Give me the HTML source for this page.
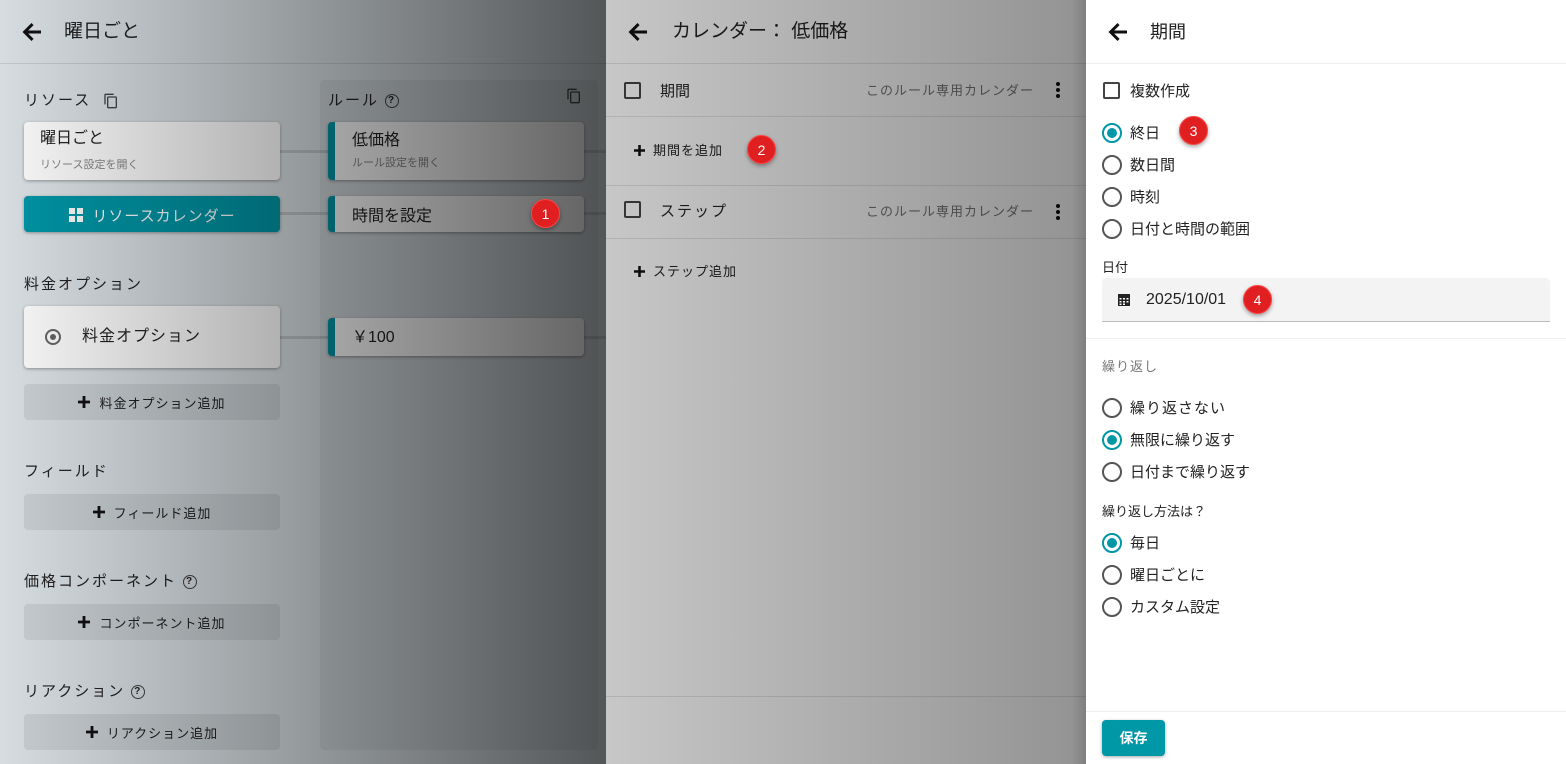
<!DOCTYPE html>
<html><head><meta charset="utf-8"><style>
*{box-sizing:border-box;margin:0;padding:0}
body{width:1566px;height:764px;overflow:hidden;position:relative;font-family:"Liberation Sans","Noto Sans CJK JP",sans-serif;color:#222;background:#fff}
.a{position:absolute}
.t{position:absolute;white-space:nowrap;line-height:1}
.card{position:absolute;background:#fff;border-radius:4px;box-shadow:0 1px 3px rgba(0,0,0,.35)}
.rc{position:absolute;background:#fff;border-radius:4px;border-left:7px solid #0097a7;box-shadow:0 1px 3px rgba(0,0,0,.35)}
.btn{position:absolute;background:rgba(0,0,0,.07);border-radius:4px;font-size:13px;display:flex;align-items:center;justify-content:center;letter-spacing:1px}
.line{position:absolute;height:3px;background:rgba(0,0,0,.12)}
.badge{position:absolute;width:29px;height:29px;border-radius:50%;background:#e02020;border:1.5px solid #f44;color:#fff;font-size:14px;display:flex;align-items:center;justify-content:center;box-shadow:0 2px 4px rgba(0,0,0,.35)}
.radio{position:absolute;width:20px;height:20px;border-radius:50%;border:2px solid #555}
.radio.on{border-color:#0097a7}
.radio.on::after{content:"";position:absolute;left:3px;top:3px;width:10px;height:10px;border-radius:50%;background:#0097a7}
.chk{position:absolute;width:17px;height:17px;border:2px solid #444;border-radius:2px}
.hr{position:absolute;height:1px;background:rgba(0,0,0,.1)}
.q{display:inline-block;width:14px;height:14px;border:1.5px solid #444;border-radius:50%;font-size:10px;text-align:center;line-height:11px;font-weight:bold;vertical-align:middle;margin-left:6px}
.pl{display:inline-block;width:12px;height:12px;margin-right:9px;vertical-align:-1px}
</style></head><body>
<svg width="0" height="0" style="position:absolute"><defs><symbol id="p" viewBox="0 0 12 12"><path d="M4.6 0h2.8v4.6H12v2.8H7.4V12H4.6V7.4H0V4.6h4.6z" fill="#111"/></symbol><symbol id="ar" viewBox="0 0 24 24"><path d="M21 10.5H8.2l5.4-5.4L11.5 3 2.5 12l9 9 2.1-2.1-5.4-5.4H21z" fill="#111"/></symbol></defs></svg>
<!-- LEFT PANEL -->
<div class="a" style="left:0;top:0;width:606px;height:764px;background:#dde4e8">
<div class="hr" style="left:0;top:63px;width:606px"></div>
<svg class="a" style="left:20px;top:20px" width="24" height="24"><use href="#ar"/></svg>
<div class="t" style="left:64px;top:22px;font-size:19px">曜日ごと</div>
<div class="a" style="left:320px;top:80px;width:278px;height:670px;background:rgba(0,0,0,.05);border-radius:4px"></div>
<div class="t" style="left:24px;top:93px;font-size:15px;letter-spacing:2px">リソース</div>
<svg class="a" style="left:103px;top:93px" width="16" height="16" viewBox="0 0 24 24"><path d="M16 1H4c-1.1 0-2 .9-2 2v14h2V3h12V1zm3 4H8c-1.1 0-2 .9-2 2v14c0 1.1.9 2 2 2h11c1.1 0 2-.9 2-2V7c0-1.1-.9-2-2-2zm0 16H8V7h11v14z" fill="#444"/></svg>
<div class="t" style="left:328px;top:93px;font-size:15px;letter-spacing:2px">ルール<span class="q">?</span></div>
<svg class="a" style="left:566px;top:88px" width="16" height="16" viewBox="0 0 24 24"><path d="M16 1H4c-1.1 0-2 .9-2 2v14h2V3h12V1zm3 4H8c-1.1 0-2 .9-2 2v14c0 1.1.9 2 2 2h11c1.1 0 2-.9 2-2V7c0-1.1-.9-2-2-2zm0 16H8V7h11v14z" fill="#444"/></svg>
<div class="line" style="left:280px;top:150px;width:326px"></div>
<div class="line" style="left:280px;top:212px;width:326px"></div>
<div class="line" style="left:280px;top:336px;width:326px"></div>
<div class="card" style="left:24px;top:122px;width:256px;height:58px"></div>
<div class="t" style="left:40px;top:131px;font-size:16px">曜日ごと</div>
<div class="t" style="left:40px;top:160px;font-size:11px;color:#888">リソース設定を開く</div>
<div class="a" style="left:24px;top:196px;width:256px;height:36px;background:#0097a7;border-radius:4px;box-shadow:0 1px 3px rgba(0,0,0,.35);color:#fff;font-size:15px;display:flex;align-items:center;justify-content:center;letter-spacing:1px;padding-top:2px">
<svg width="16" height="16" viewBox="0 0 16 16" style="margin-right:8px"><rect x="1" y="1" width="6" height="6" fill="#fff"/><rect x="9" y="1" width="6" height="6" fill="#fff"/><rect x="1" y="9" width="6" height="6" fill="#fff"/><rect x="9" y="9" width="6" height="6" fill="#fff"/></svg>リソースカレンダー</div>
<div class="rc" style="left:328px;top:122px;width:256px;height:58px"></div>
<div class="t" style="left:352px;top:133px;font-size:16px">低価格</div>
<div class="t" style="left:352px;top:158px;font-size:11px;color:#888">ルール設定を開く</div>
<div class="rc" style="left:328px;top:196px;width:256px;height:36px"></div>
<div class="t" style="left:352px;top:209px;font-size:16px">時間を設定</div>
<div class="t" style="left:24px;top:277px;font-size:15px;letter-spacing:2px">料金オプション</div>
<div class="card" style="left:24px;top:306px;width:256px;height:62px"></div>
<div class="a" style="left:45px;top:329px;width:16px;height:16px;border:2px solid #666;border-radius:50%"></div>
<div class="a" style="left:50px;top:334px;width:6px;height:6px;background:#666;border-radius:50%"></div>
<div class="t" style="left:82px;top:329px;font-size:16px;letter-spacing:1px">料金オプション</div>
<div class="rc" style="left:328px;top:318px;width:256px;height:38px"></div>
<div class="t" style="left:352px;top:330px;font-size:16px">￥100</div>
<div class="btn" style="left:24px;top:384px;width:256px;height:36px"><svg class="pl"><use href="#p"/></svg>料金オプション追加</div>
<div class="t" style="left:24px;top:464px;font-size:15px;letter-spacing:2px">フィールド</div>
<div class="btn" style="left:24px;top:494px;width:256px;height:36px"><svg class="pl"><use href="#p"/></svg>フィールド追加</div>
<div class="t" style="left:24px;top:574px;font-size:15px;letter-spacing:2px">価格コンポーネント<span class="q">?</span></div>
<div class="btn" style="left:24px;top:604px;width:256px;height:36px"><svg class="pl"><use href="#p"/></svg>コンポーネント追加</div>
<div class="t" style="left:24px;top:684px;font-size:15px;letter-spacing:2px">リアクション<span class="q">?</span></div>
<div class="btn" style="left:24px;top:714px;width:256px;height:36px"><svg class="pl"><use href="#p"/></svg>リアクション追加</div>
<div class="a" style="left:0;top:0;width:606px;height:764px;background:linear-gradient(to right,rgba(0,0,0,.03),rgba(0,0,0,.62))"></div>
<div class="badge" style="left:531px;top:199px">1</div>
</div>
<!-- MIDDLE PANEL -->
<div class="a" style="left:606px;top:0;width:480px;height:764px;background:#fff">
<svg class="a" style="left:20px;top:20px" width="24" height="24"><use href="#ar"/></svg>
<div class="t" style="left:66px;top:22px;font-size:19px">カレンダー： 低価格</div>
<div class="hr" style="left:0;top:63px;width:480px"></div>
<div class="chk" style="left:18px;top:82px"></div>
<div class="t" style="left:54px;top:84px;font-size:15px">期間</div>
<div class="t" style="left:260px;top:84px;font-size:13px;color:#777;letter-spacing:1px">このルール専用カレンダー</div>
<svg class="a" style="left:446px;top:80px" width="12" height="20"><circle cx="6" cy="4" r="2" fill="#111"/><circle cx="6" cy="10" r="2" fill="#111"/><circle cx="6" cy="16" r="2" fill="#111"/></svg>
<div class="hr" style="left:0;top:116px;width:480px"></div>
<div class="t" style="left:28px;top:144px;font-size:13px;letter-spacing:1px"><svg class="pl" style="width:11px;height:11px;margin-right:8px"><use href="#p"/></svg>期間を追加</div>
<div class="hr" style="left:0;top:185px;width:480px"></div>
<div class="chk" style="left:18px;top:201px"></div>
<div class="t" style="left:54px;top:204px;font-size:15px;letter-spacing:2px">ステップ</div>
<div class="t" style="left:260px;top:205px;font-size:13px;color:#777;letter-spacing:1px">このルール専用カレンダー</div>
<svg class="a" style="left:446px;top:202px" width="12" height="20"><circle cx="6" cy="4" r="2" fill="#111"/><circle cx="6" cy="10" r="2" fill="#111"/><circle cx="6" cy="16" r="2" fill="#111"/></svg>
<div class="hr" style="left:0;top:238px;width:480px"></div>
<div class="t" style="left:28px;top:265px;font-size:13px;letter-spacing:1px"><svg class="pl" style="width:11px;height:11px;margin-right:8px"><use href="#p"/></svg>ステップ追加</div>
<div class="hr" style="left:0;top:696px;width:480px"></div>
<div class="a" style="left:0;top:0;width:480px;height:764px;background:linear-gradient(to right,rgba(0,0,0,.22) 0%,rgba(0,0,0,.42) 97%,rgba(0,0,0,.5) 100%)"></div>
<div class="badge" style="left:141px;top:135px">2</div>
</div>
<!-- RIGHT PANEL -->
<div class="a" style="left:1086px;top:0;width:480px;height:764px;background:#fff">
<svg class="a" style="left:20px;top:20px" width="24" height="24"><use href="#ar"/></svg>
<div class="t" style="left:64px;top:23px;font-size:18px">期間</div>
<div class="hr" style="left:0;top:63px;width:480px;background:#eee"></div>
<div class="chk" style="left:17px;top:82px"></div>
<div class="t" style="left:44px;top:84px;font-size:15px">複数作成</div>
<div class="radio on" style="left:16px;top:123px"></div><div class="t" style="left:44px;top:126px;font-size:15px">終日</div>
<div class="radio" style="left:16px;top:155px"></div><div class="t" style="left:44px;top:158px;font-size:15px">数日間</div>
<div class="radio" style="left:16px;top:187px"></div><div class="t" style="left:44px;top:190px;font-size:15px">時刻</div>
<div class="radio" style="left:16px;top:219px"></div><div class="t" style="left:44px;top:222px;font-size:15px">日付と時間の範囲</div>
<div class="badge" style="left:93px;top:116px">3</div>
<div class="t" style="left:16px;top:261px;font-size:13px">日付</div>
<div class="a" style="left:16px;top:278px;width:448px;height:44px;background:#f3f3f3;border-radius:4px 4px 0 0;border-bottom:1px solid #bbb"></div>
<svg class="a" style="left:31px;top:293px" width="14" height="14" viewBox="0 0 14 14"><rect x="1" y="1" width="12" height="12" fill="#222"/><g fill="#fff"><rect x="2.5" y="5" width="2" height="1.5"/><rect x="6" y="5" width="2" height="1.5"/><rect x="9.5" y="5" width="2" height="1.5"/><rect x="2.5" y="8" width="2" height="1.5"/><rect x="6" y="8" width="2" height="1.5"/><rect x="9.5" y="8" width="2" height="1.5"/><rect x="2.5" y="10.5" width="2" height="1.5"/><rect x="6" y="10.5" width="2" height="1.5"/></g></svg>
<div class="t" style="left:60px;top:292px;font-size:16px">2025/10/01</div>
<div class="badge" style="left:157px;top:285px">4</div>
<div class="hr" style="left:0;top:338px;width:480px;background:#eee"></div>
<div class="t" style="left:16px;top:360px;font-size:13px;color:#777;letter-spacing:1px">繰り返し</div>
<div class="radio" style="left:16px;top:398px"></div><div class="t" style="left:44px;top:401px;font-size:15px;letter-spacing:1px">繰り返さない</div>
<div class="radio on" style="left:16px;top:430px"></div><div class="t" style="left:44px;top:433px;font-size:15px">無限に繰り返す</div>
<div class="radio" style="left:16px;top:462px"></div><div class="t" style="left:44px;top:465px;font-size:15px">日付まで繰り返す</div>
<div class="t" style="left:16px;top:505px;font-size:13px">繰り返し方法は？</div>
<div class="radio on" style="left:16px;top:533px"></div><div class="t" style="left:44px;top:536px;font-size:15px">毎日</div>
<div class="radio" style="left:16px;top:565px"></div><div class="t" style="left:44px;top:568px;font-size:15px">曜日ごとに</div>
<div class="radio" style="left:16px;top:597px"></div><div class="t" style="left:44px;top:600px;font-size:15px">カスタム設定</div>
<div class="hr" style="left:0;top:711px;width:480px;background:#eee"></div>
<div class="a" style="left:16px;top:720px;width:63px;height:36px;background:#0097a7;border-radius:4px;box-shadow:0 1px 3px rgba(0,0,0,.35);color:#fff;font-weight:bold;font-size:14px;display:flex;align-items:center;justify-content:center">保存</div>
</div>
</body></html>
